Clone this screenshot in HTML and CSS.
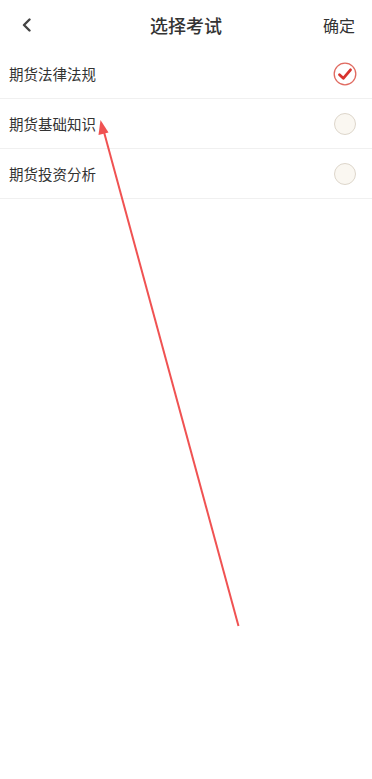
FILE: index.html
```html
<!DOCTYPE html>
<html lang="zh-CN">
<head>
  <meta charset="UTF-8" />
  <meta name="viewport" content="width=device-width, initial-scale=1.0" />
  <title>选择考试</title>
  <link rel="stylesheet" href="styles.css">
</head>
<body>

  <div class="header">
    <span class="back">
      <svg width="12" height="14" viewBox="0 0 12 14"><path d="M8.5 1.5 L3 7 L8.5 12.5" fill="none" stroke="#444" stroke-width="2.4" stroke-linecap="round" stroke-linejoin="round"/></svg>
    </span>
    <h1>选择考试</h1>
    <span class="ok">确定</span>
  </div>

  <div class="list">
    <div class="item">
      <span class="name">期货法律法规</span>
      <span class="radio checked">
        <svg width="24" height="24" viewBox="0 0 24 24"><circle cx="12" cy="12" r="10.8" fill="#fff" stroke="#e06a60" stroke-width="1.3"/><path d="M6.5 12.8 L10.3 16.3 L17.5 7.8" fill="none" stroke="#d8332e" stroke-width="2.8" stroke-linecap="round" stroke-linejoin="round"/></svg>
      </span>
    </div>
    <div class="item">
      <span class="name">期货基础知识</span>
      <span class="radio"></span>
    </div>
    <div class="item">
      <span class="name">期货投资分析</span>
      <span class="radio"></span>
    </div>
  </div>

  <!-- annotation arrow drawn over the page -->
  <svg class="arrow" width="372" height="779" viewBox="0 0 372 779">
    <line x1="238.5" y1="626" x2="104" y2="132" stroke="#f05252" stroke-width="2"/>
    <polygon points="100.5,120 98.5,135 108.5,132.5" fill="#f05252"/>
  </svg>

</body>
</html>
```

FILE: styles.css
```css
body { margin: 0; background: #fff; font-family: "Noto Sans CJK SC", "Noto Sans", sans-serif; color: #333; }
.header { height: 49px; display: flex; align-items: center; justify-content: space-between; padding: 0 17px 0 21px; position: relative; }
.header h1 { position: absolute; left: 0; right: 0; margin: 0; text-align: center; font-size: 18px; font-weight: 500; color: #333; pointer-events: none; }
.back { display: flex; align-items: center; }
.ok { font-size: 16px; color: #333; }
.item { height: 49px; border-bottom: 1px solid #f0f0f0; display: flex; align-items: center; justify-content: space-between; padding: 0 16px 0 9px; }
.name { font-size: 14.5px; color: #333; }
.radio { width: 22px; height: 22px; border-radius: 50%; border: 1px solid #ddd6cb; background: #faf7f1; box-sizing: border-box; display: flex; align-items: center; justify-content: center; }
.radio.checked { border: none; background: none; width: 24px; height: 24px; margin-right: -1px; }
.arrow { position: absolute; left: 0; top: 0; pointer-events: none; }
```
